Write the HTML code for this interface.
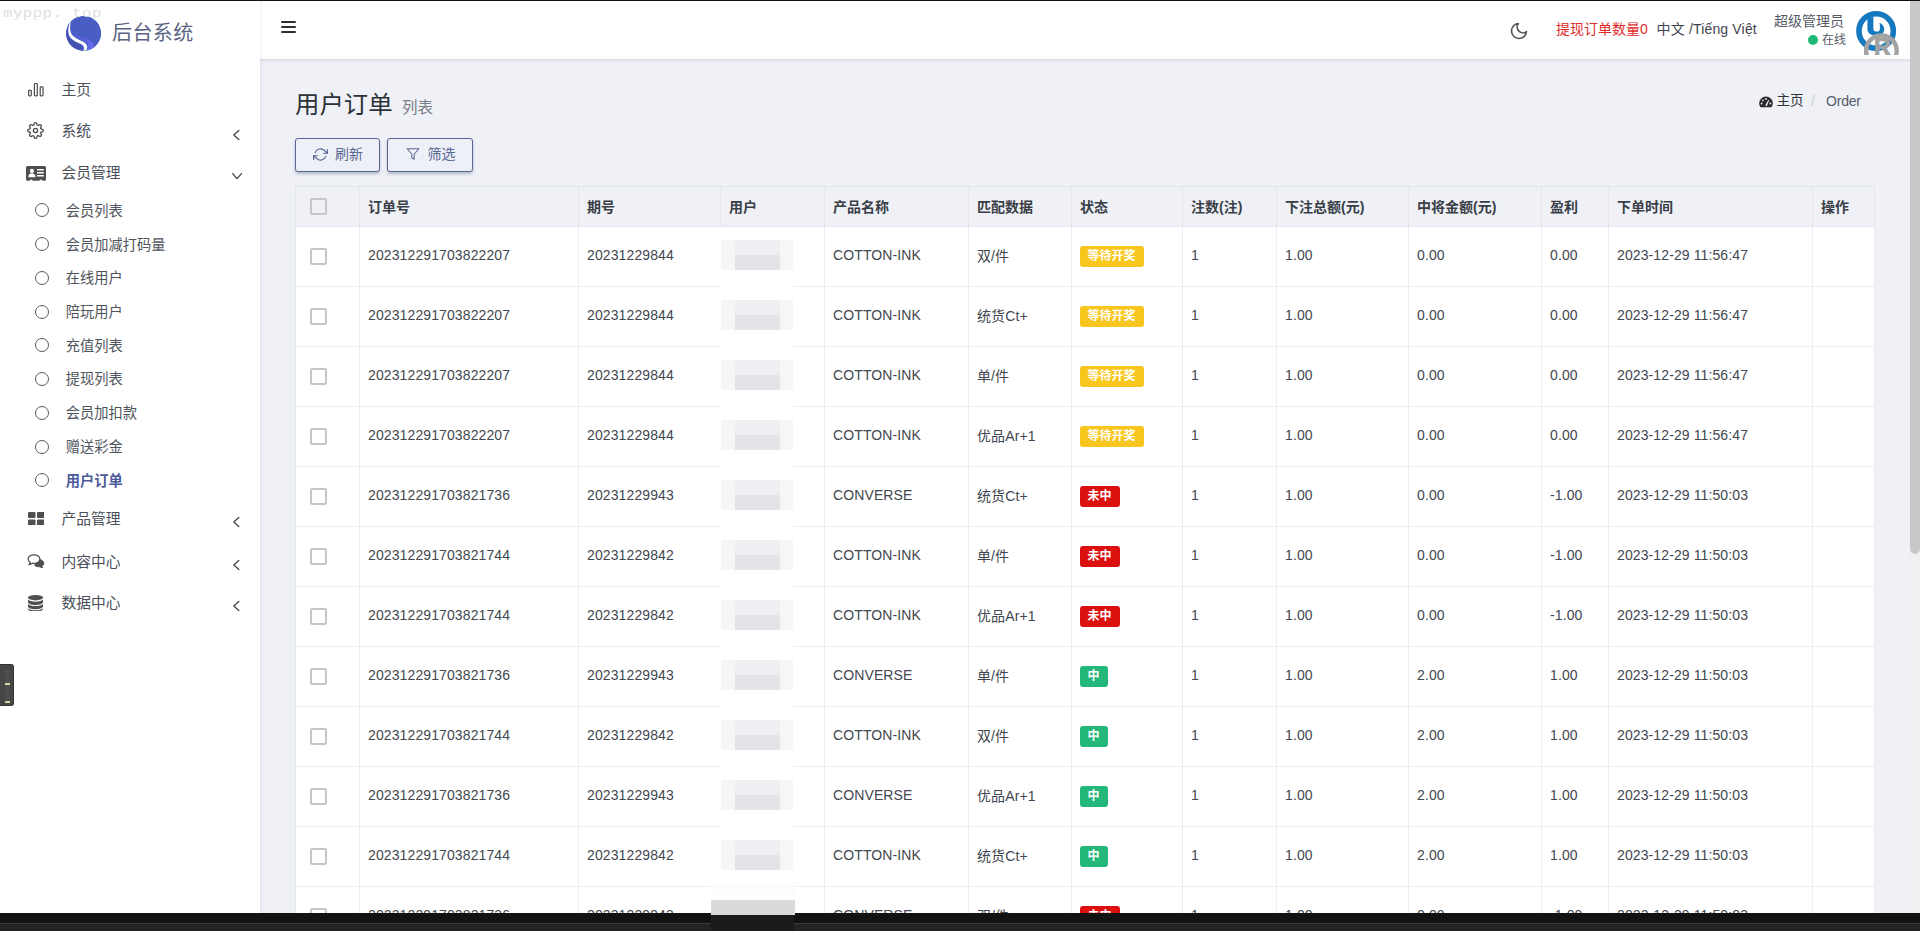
<!DOCTYPE html>
<html lang="zh-CN">
<head>
<meta charset="utf-8">
<title>用户订单</title>
<style>
*{box-sizing:border-box;margin:0;padding:0}
html,body{width:1920px;height:931px;overflow:hidden;background:#eff1f7}
body{position:relative;font-family:"Liberation Sans","Noto Sans CJK SC",sans-serif;font-size:14px;color:#414750}
.abs{position:absolute}
#topline{left:0;top:0;width:1920px;height:1px;background:#111;z-index:50}
#sidebar{left:0;top:0;width:260px;height:913px;background:#fff;z-index:5;box-shadow:1px 0 3px rgba(80,80,100,.10)}
#navbar{left:260px;top:0;width:1650px;height:59px;background:#fff;box-shadow:0 1px 4px rgba(100,105,130,.22);z-index:4}
#bottombar{left:0;top:913px;width:1920px;height:18px;background:#121212;z-index:60}
#bottombar i{position:absolute;left:0;top:10px;width:1920px;height:8px;background:#232321;border-top:1px solid #3a3a3a}#bottombar b{position:absolute;left:711px;top:2px;width:83px;height:16px;background:#1b1b1b}#mz{left:711px;top:885px;width:84px;height:30px;background:linear-gradient(#fdfdfd 0,#fdfdfd 50%,#dadada 50%,#dadada 100%);z-index:61}
#scroll{left:1910px;top:1px;width:10px;height:912px;background:#f0f0f0;z-index:40}
#scroll i{position:absolute;left:0;top:0;width:10px;height:553px;background:#c8c8c8;border-radius:0 0 5px 5px}
#wm{left:3px;top:5px;font-family:"Liberation Mono","Noto Serif CJK SC",monospace;font-size:12px;line-height:18px;color:#dedede;letter-spacing:.4px;transform:scale(1.3,1.05);transform-origin:0 50%;z-index:7;white-space:nowrap}
#brand{left:112px;top:19px;font-size:20px;line-height:28px;color:#5a6482;white-space:nowrap;letter-spacing:.4px;z-index:6}
#logo{left:65px;top:15px;width:38px;height:38px;z-index:6}
.mi{position:absolute;left:61.500px;font-size:14.750px;line-height:20px;color:#4a4f58;white-space:nowrap;z-index:6}
.si{position:absolute;left:65.700px;font-size:14.250px;line-height:20px;color:#4f545c;white-space:nowrap;z-index:6}
.si.act{color:#4c5a9a;font-weight:bold}
.circ{position:absolute;left:35px;width:14px;height:14px;border:1.450px solid #5a5a5a;border-radius:50%;z-index:6}
.ico{position:absolute;z-index:6}
.arr{position:absolute;left:231px;width:10px;height:12px;z-index:6}

/* navbar */
#burger{left:281px;top:21px;width:15px;height:12px;z-index:6}
#burger i{position:absolute;left:0;width:15px;height:2px;background:#2f2f2f;border-radius:1px}
#moon{left:1509px;top:21px;width:20px;height:20px;z-index:6}
#wd{left:1556px;top:19px;font-size:14px;line-height:20px;color:#e02b2b;white-space:nowrap;z-index:6}
#lang{left:1656.500px;top:18.500px;letter-spacing:.17px;font-size:14px;line-height:20px;color:#3f4450;white-space:nowrap;z-index:6}
#uname{left:1774px;top:11px;width:70px;text-align:right;font-size:14px;line-height:20px;color:#555b66;white-space:nowrap;z-index:6}
#ustat{left:1808px;top:31px;font-size:12px;line-height:18px;color:#555b66;white-space:nowrap;z-index:6}
#ustat b{position:absolute;left:0;top:4px;width:10px;height:10px;border-radius:50%;background:#21b978}
#ustat span{margin-left:14px}
#avatar{left:1850px;top:8px;width:52px;height:47px;z-index:6;overflow:hidden}
/* content header */
#title{left:295px;top:86.500px;font-size:24.400px;line-height:36px;color:#2c3138;font-weight:400;white-space:nowrap}
#sub{left:402px;top:96.500px;font-size:15.5px;line-height:22px;color:#777c85;white-space:nowrap}
#bc{left:1759px;top:91px;font-size:14px;line-height:20px;white-space:nowrap;color:#555d6b}
#bc .h{position:absolute;left:17.500px;top:0;color:#2f3238;font-size:13.600px}
#bc .s{position:absolute;left:52px;top:0;color:#c8cad2}
#bc .o{position:absolute;left:67px;top:0;color:#555d6b;letter-spacing:-.2px}
#bc svg{position:absolute;left:0;top:4.500px;width:14px;height:12px}
.btn{position:absolute;top:138px;height:34px;border:1px solid #59668f;border-radius:3px;background:#eef0f8;color:#5a6792;font-size:14px;line-height:32px;white-space:nowrap;box-shadow:0 2px 3px rgba(60,70,110,.32)}
.btn svg{position:absolute}
.btn span{position:absolute;top:-1px}
/* table */
#tbl{left:295px;top:186px;width:1580px;border-collapse:separate;border-spacing:0;table-layout:fixed;border-left:1px solid #e3e5ec;border-top:1px solid #e3e5ec;background:#fff}
#tbl th,#tbl td{border-right:1px solid #ededf1;border-bottom:1px solid #ededf1;padding:0 0 0 8px;text-align:left;vertical-align:middle;white-space:nowrap;overflow:hidden;font-size:14px}
#tbl th{border-bottom-color:#e3e5eb;border-right-color:#e4e6ec;height:40px;background:#eff1f7;color:#393e46;font-weight:bold;font-size:14px;padding-bottom:2px}
#tbl td{height:60px;color:#414750;padding-bottom:4px;letter-spacing:.11px}
#tbl td.ck,#tbl th.ck{padding-left:14px}#tbl td.ck{padding-bottom:0;padding-top:0}#tbl td.ck .cb{position:relative;top:-.5px}#tbl th.ck{padding-bottom:0}
.cb{display:block;width:17px;height:17px;border:2px solid #c4c6ca;border-radius:2px;background:#fff}
th .cb{background:#eff1f7}
.bd{position:relative;top:2px;letter-spacing:0;display:inline-block;height:21px;line-height:20px;padding:0 8px 0 7.500px;border-radius:3px;color:#fff;font-size:12px;font-weight:bold;vertical-align:middle}
.bd.w{background:#f9c61e}.bd.d{background:#dc0f0f}.bd.s{background:#24b77a}
td.u{position:relative;padding:0!important;overflow:visible!important;border-right-color:#e6e8ee}
td.u i{position:absolute;display:block}
td.u .m1{left:-1px;top:-1px;width:73px;height:61px;background:#fff}
tbody tr:first-child td.u .m1{top:0;height:60px}
td.u .m2{left:0;top:13px;width:72px;height:30px;background:#f6f6f7}
td.u .m3{left:14px;top:13px;width:45px;height:30px;background:linear-gradient(#eeeff2 0,#eeeff2 50%,#e3e4e8 50%,#e3e4e8 100%)}
</style>
</head>
<body>
<div id="topline" class="abs"></div>
<div id="sidebar" class="abs"></div>
<div id="navbar" class="abs"></div>
<div id="wm" class="abs">myppp. top</div>
<svg id="logo" class="abs" viewBox="0 0 38 38"><defs><linearGradient id="lg" x1="0" y1="0" x2="1" y2="1"><stop offset="0" stop-color="#4b5dc4"/><stop offset=".55" stop-color="#5c62dc"/><stop offset="1" stop-color="#7070f8"/></linearGradient><clipPath id="lc"><circle cx="18.600" cy="18.400" r="17.500"/></clipPath></defs><circle cx="18.600" cy="18.400" r="17.500" fill="#4a5dc5"/><g clip-path="url(#lc)"><path d="M7 5C1 9-1 20 3 27c3 5 9 8 16 9-1-3-2-6-6-8-5-2-9-4-10-9C2.500 14 4 9 7 5z" fill="#4452b2"/><path d="M6.500 17c5 4.500 11.500 5 17.500 7.800 5 2.500 6.500 6.700 3 10.200l-5 1c3-4 1.800-7.800-3.200-10.200C13.500 23.300 8 22 6.500 17z" fill="url(#lg)"/><path d="M6.200 5.500C3.300 10 2.400 16 4.200 20.500c2 4.500 6.600 6.200 11.100 8.200 3.300 1.500 4.600 3.500 3 7.100l3.200-.5c2.200-4.400-.2-7.200-5-9.400C11.500 23.500 7.300 21.800 5.700 17.300 4.600 13.700 5.100 9.500 6.200 5.500z" fill="#fff"/></g></svg>
<div id="brand" class="abs">后台系统</div>

<!-- sidebar menu -->
<svg class="ico" style="left:27px;top:82px;width:18px;height:16px" viewBox="0 0 18 16" fill="none" stroke="#4d4d4d" stroke-width="1.2"><rect x="1.600" y="8.400" width="2.700" height="5.500" rx=".8"/><rect x="7.400" y="1.500" width="2.900" height="12.400" rx=".8"/><rect x="13.200" y="4.900" width="2.800" height="9" rx=".8"/></svg>
<svg class="ico" style="left:27.200px;top:121.900px;width:17px;height:17px" viewBox="0 0 24 24" fill="none" stroke="#4d4d4d" stroke-width="1.850" stroke-linecap="round" stroke-linejoin="round"><circle cx="12" cy="12" r="3"/><path d="M19.4 15a1.65 1.65 0 0 0 .33 1.82l.06.06a2 2 0 0 1 0 2.83 2 2 0 0 1-2.83 0l-.06-.06a1.65 1.65 0 0 0-1.82-.33 1.65 1.65 0 0 0-1 1.51V21a2 2 0 0 1-2 2 2 2 0 0 1-2-2v-.09A1.65 1.65 0 0 0 9 19.4a1.65 1.65 0 0 0-1.82.33l-.06.06a2 2 0 0 1-2.83 0 2 2 0 0 1 0-2.83l.06-.06a1.65 1.65 0 0 0 .33-1.82 1.65 1.65 0 0 0-1.51-1H3a2 2 0 0 1-2-2 2 2 0 0 1 2-2h.09A1.65 1.65 0 0 0 4.6 9a1.65 1.65 0 0 0-.33-1.82l-.06-.06a2 2 0 0 1 0-2.83 2 2 0 0 1 2.83 0l.06.06a1.65 1.65 0 0 0 1.82.33H9a1.65 1.65 0 0 0 1-1.51V3a2 2 0 0 1 2-2 2 2 0 0 1 2 2v.09a1.65 1.65 0 0 0 1 1.51 1.65 1.65 0 0 0 1.82-.33l.06-.06a2 2 0 0 1 2.83 0 2 2 0 0 1 0 2.83l-.06.06a1.65 1.65 0 0 0-.33 1.82V9a1.65 1.65 0 0 0 1.51 1H21a2 2 0 0 1 2 2 2 2 0 0 1-2 2h-.09a1.65 1.65 0 0 0-1.51 1z"/></svg>
<svg class="ico" style="left:26px;top:165.500px;width:20px;height:15px" viewBox="0 0 20 15"><path d="M1.500 0h17A1.500 1.500 0 0 1 20 1.500v11.700a1.500 1.500 0 0 1-1.500 1.500h-2.300v-1h-2.600v1H6.400v-1H3.800v1H1.500A1.500 1.500 0 0 1 0 13.200V1.500A1.500 1.500 0 0 1 1.500 0z" fill="#4f4f4f"/><circle cx="5.900" cy="4.900" r="2.100" fill="#fff"/><path d="M2.300 11.300c0-2.600 1.400-4 3.600-4s3.600 1.400 3.600 4z" fill="#fff"/><rect x="11" y="3" width="6.800" height="1.500" fill="#fff"/><rect x="11" y="6" width="6.800" height="1.500" fill="#fff"/><rect x="11" y="9" width="6.800" height="1.500" fill="#fff"/></svg>
<svg class="ico" style="left:27.500px;top:511.700px;width:16.500px;height:13.600px" viewBox="0 0 16.500 13.600" fill="#4f4f4f"><rect x="0" y="0" width="7.500" height="6" rx="1"/><rect x="9" y="0" width="7.500" height="6" rx="1"/><rect x="0" y="7.600" width="7.500" height="6" rx="1"/><rect x="9" y="7.600" width="7.500" height="6" rx="1"/></svg>
<svg class="ico" style="left:26.500px;top:554.300px;width:18.200px;height:14.200px" viewBox="0 0 18.200 14.200"><path d="M11.600 5.200c2.900.3 5.200 2 5.200 4.100 0 1.200-.8 2.300-2 3 .3.700.8 1.300 1.300 1.600-1.300 0-2.500-.4-3.400-1.100-2.300.2-4.300-.5-5.400-1.700" fill="#4f4f4f" stroke="#4f4f4f" stroke-width=".9" stroke-linejoin="round"/><path d="M7 .8c3.300 0 5.900 1.900 5.900 4.300S10.300 9.400 7 9.400c-.6 0-1.100-.1-1.600-.2-.9.800-2.100 1.300-3.400 1.400.6-.6 1-1.300 1.300-2.100C2 7.700 1.100 6.500 1.100 5.100 1.100 2.700 3.700.8 7 .8z" fill="#fff" stroke="#4f4f4f" stroke-width="1.200" stroke-linejoin="round"/></svg>
<svg class="ico" style="left:28.300px;top:594.600px;width:15px;height:16.600px" viewBox="0 0 15 16.600" fill="#4f4f4f"><ellipse cx="7.500" cy="2.700" rx="7.500" ry="2.700"/><path d="M0 4.600c1.200 1.500 4 2.100 7.500 2.100S13.800 6.100 15 4.600v2.600c0 1.500-3.400 2.700-7.500 2.700S0 8.700 0 7.200z"/><path d="M0 8.900c1.200 1.500 4 2.100 7.500 2.100s6.300-.6 7.500-2.100v2.600c0 1.500-3.400 2.700-7.500 2.700S0 13 0 11.500z"/><path d="M0 13.200c1.200 1.500 4 2.100 7.500 2.100s6.300-.6 7.500-2.100v.7c0 1.500-3.400 2.700-7.500 2.700S0 15.400 0 13.900z"/></svg>
<div class="mi" style="top:80.0px">主页</div>
<div class="mi" style="top:121.3px">系统</div>
<svg class="arr" style="top:128.6px" viewBox="0 0 10 12" fill="none" stroke="#444" stroke-width="1.300" stroke-linecap="round" stroke-linejoin="round"><polyline points="7.800,1.500 2.800,6 7.800,10.500"/></svg>
<div class="mi" style="top:162.8px">会员管理</div>
<svg class="arr" style="left:230.500px;top:171.4px;width:12px;height:10px" viewBox="0 0 12 10" fill="none" stroke="#444" stroke-width="1.300" stroke-linecap="round" stroke-linejoin="round"><polyline points="1.700,2.600 6,7.600 10.500,2.600"/></svg>
<div class="mi" style="top:508.9px">产品管理</div>
<svg class="arr" style="top:516.2px" viewBox="0 0 10 12" fill="none" stroke="#444" stroke-width="1.300" stroke-linecap="round" stroke-linejoin="round"><polyline points="7.800,1.500 2.800,6 7.800,10.500"/></svg>
<div class="mi" style="top:551.6px">内容中心</div>
<svg class="arr" style="top:558.9px" viewBox="0 0 10 12" fill="none" stroke="#444" stroke-width="1.300" stroke-linecap="round" stroke-linejoin="round"><polyline points="7.800,1.500 2.800,6 7.800,10.500"/></svg>
<div class="mi" style="top:593.1px">数据中心</div>
<svg class="arr" style="top:600.4px" viewBox="0 0 10 12" fill="none" stroke="#444" stroke-width="1.300" stroke-linecap="round" stroke-linejoin="round"><polyline points="7.800,1.500 2.800,6 7.800,10.500"/></svg>
<div class="circ" style="top:203.3px"></div><div class="si" style="top:200.7px">会员列表</div>
<div class="circ" style="top:237.1px"></div><div class="si" style="top:234.5px">会员加减打码量</div>
<div class="circ" style="top:270.8px"></div><div class="si" style="top:268.2px">在线用户</div>
<div class="circ" style="top:304.6px"></div><div class="si" style="top:301.9px">陪玩用户</div>
<div class="circ" style="top:338.3px"></div><div class="si" style="top:335.7px">充值列表</div>
<div class="circ" style="top:372.1px"></div><div class="si" style="top:369.4px">提现列表</div>
<div class="circ" style="top:405.8px"></div><div class="si" style="top:403.2px">会员加扣款</div>
<div class="circ" style="top:439.6px"></div><div class="si" style="top:436.9px">赠送彩金</div>
<div class="circ" style="top:473.3px"></div><div class="si act" style="top:470.7px">用户订单</div>
<div class="abs" style="left:0;top:664px;width:14px;height:42px;background:#464646;border:1px solid #333;border-left:0;border-radius:0 3px 3px 0;z-index:8"><i style="position:absolute;left:5px;top:6px;width:5px;height:30px;background:repeating-linear-gradient(#555 0,#555 1px,#464646 1px,#464646 2px)"></i><i style="position:absolute;left:5px;top:18px;width:5px;height:2px;background:#d9d3a8"></i><i style="position:absolute;left:5px;top:36px;width:5px;height:2px;background:#d9d3a8"></i></div>

<!-- navbar -->
<div id="burger" class="abs"><i style="top:0"></i><i style="top:5px"></i><i style="top:10px"></i></div>
<svg id="moon" class="abs" viewBox="0 0 24 24" fill="none" stroke="#555" stroke-width="2" stroke-linecap="round" stroke-linejoin="round"><path d="M21 12.790A9 9 0 1 1 11.210 3 7 7 0 0 0 21 12.790z"/></svg>
<div id="wd" class="abs">提现订单数量0</div>
<div id="lang" class="abs">中文 /Tiếng Việt</div>
<div id="uname" class="abs">超级管理员</div>
<div id="ustat" class="abs"><b></b><span>在线</span></div>
<svg id="avatar" class="abs" viewBox="0 0 52 47"><circle cx="26.150" cy="23" r="17.200" fill="#fff" stroke="#1679c0" stroke-width="5.600"/><path d="M17.400 9.500V21c0 4 3.600 6.700 8.600 6.700s8.300-2.700 8.300-6.700c0-3-2.300-5-4.800-6.300.5 2.300.5 4.800.3 6.800-.3 1.700-1.800 2.100-3.300 2.100-2 0-3.100-1.100-3.100-2.600V9z" fill="#1679c0"/><circle cx="31.400" cy="42.700" r="15.300" fill="none" stroke="#a3a3a3" stroke-width="4.400"/><text x="32.200" y="47.300" text-anchor="middle" style="font:bold 23px 'Liberation Sans',sans-serif" fill="#a3a3a3" stroke="#a3a3a3" stroke-width=".9">R</text></svg>

<!-- content header -->
<div id="title" class="abs">用户订单</div>
<div id="sub" class="abs">列表</div>
<div id="bc" class="abs"><svg viewBox="0 0 14 12"><path d="M7 .5A6.800 6.800 0 0 0 .2 7.300c0 1.500.5 2.900 1.300 4h11c.8-1.100 1.300-2.500 1.300-4A6.800 6.800 0 0 0 7 .5z" fill="#2b2b2e"/><circle cx="2.600" cy="7.500" r=".9" fill="#eff1f7"/><circle cx="3.900" cy="4.300" r=".9" fill="#eff1f7"/><circle cx="7" cy="3" r=".9" fill="#eff1f7"/><circle cx="11.400" cy="7.500" r=".9" fill="#eff1f7"/><path d="M6.300 9.500l2.900-5.600.9.500-2.300 5.800z" fill="#eff1f7"/></svg><span class="h">主页</span><span class="s">/</span><span class="o">Order</span></div>
<div class="btn" style="left:295px;width:85px"><svg style="left:16.800px;top:7.500px;width:15px;height:15px" viewBox="0 0 24 24" fill="none" stroke="#5a6792" stroke-width="1.800" stroke-linecap="round" stroke-linejoin="round"><polyline points="23 4 23 10 17 10"/><polyline points="1 20 1 14 7 14"/><path d="M3.510 9a9 9 0 0 1 14.850-3.360L23 10M1 14l4.640 4.360A9 9 0 0 0 20.490 15"/></svg><span style="left:39px">刷新</span></div>
<div class="btn" style="left:387px;width:86px"><svg style="left:18px;top:8px;width:14px;height:14px" viewBox="0 0 24 24" fill="none" stroke="#5a6792" stroke-width="1.800" stroke-linecap="round" stroke-linejoin="round"><polygon points="22 3 2 3 10 12.460 10 19 14 21 14 12.460 22 3"/></svg><span style="left:39.500px">筛选</span></div>

<!-- table -->
<table id="tbl" class="abs">
<colgroup><col style="width:64px"><col style="width:219px"><col style="width:142px"><col style="width:104px"><col style="width:144px"><col style="width:103px"><col style="width:111px"><col style="width:94px"><col style="width:132px"><col style="width:133px"><col style="width:67px"><col style="width:204px"><col style="width:62px"></colgroup>
<thead><tr><th class="ck"><span class="cb"></span></th><th>订单号</th><th>期号</th><th>用户</th><th>产品名称</th><th>匹配数据</th><th>状态</th><th>注数(注)</th><th>下注总额(元)</th><th>中将金额(元)</th><th>盈利</th><th>下单时间</th><th>操作</th></tr></thead>
<tbody>
<tr><td class="ck"><span class="cb"></span></td><td>202312291703822207</td><td>20231229844</td><td class="u"><i class="m1"></i><i class="m2"></i><i class="m3"></i></td><td>COTTON-INK</td><td>双/件</td><td><span class="bd w">等待开奖</span></td><td>1</td><td>1.00</td><td>0.00</td><td>0.00</td><td>2023-12-29 11:56:47</td><td></td></tr>
<tr><td class="ck"><span class="cb"></span></td><td>202312291703822207</td><td>20231229844</td><td class="u"><i class="m1"></i><i class="m2"></i><i class="m3"></i></td><td>COTTON-INK</td><td>统货Ct+</td><td><span class="bd w">等待开奖</span></td><td>1</td><td>1.00</td><td>0.00</td><td>0.00</td><td>2023-12-29 11:56:47</td><td></td></tr>
<tr><td class="ck"><span class="cb"></span></td><td>202312291703822207</td><td>20231229844</td><td class="u"><i class="m1"></i><i class="m2"></i><i class="m3"></i></td><td>COTTON-INK</td><td>单/件</td><td><span class="bd w">等待开奖</span></td><td>1</td><td>1.00</td><td>0.00</td><td>0.00</td><td>2023-12-29 11:56:47</td><td></td></tr>
<tr><td class="ck"><span class="cb"></span></td><td>202312291703822207</td><td>20231229844</td><td class="u"><i class="m1"></i><i class="m2"></i><i class="m3"></i></td><td>COTTON-INK</td><td>优品Ar+1</td><td><span class="bd w">等待开奖</span></td><td>1</td><td>1.00</td><td>0.00</td><td>0.00</td><td>2023-12-29 11:56:47</td><td></td></tr>
<tr><td class="ck"><span class="cb"></span></td><td>202312291703821736</td><td>20231229943</td><td class="u"><i class="m1"></i><i class="m2"></i><i class="m3"></i></td><td>CONVERSE</td><td>统货Ct+</td><td><span class="bd d">未中</span></td><td>1</td><td>1.00</td><td>0.00</td><td>-1.00</td><td>2023-12-29 11:50:03</td><td></td></tr>
<tr><td class="ck"><span class="cb"></span></td><td>202312291703821744</td><td>20231229842</td><td class="u"><i class="m1"></i><i class="m2"></i><i class="m3"></i></td><td>COTTON-INK</td><td>单/件</td><td><span class="bd d">未中</span></td><td>1</td><td>1.00</td><td>0.00</td><td>-1.00</td><td>2023-12-29 11:50:03</td><td></td></tr>
<tr><td class="ck"><span class="cb"></span></td><td>202312291703821744</td><td>20231229842</td><td class="u"><i class="m1"></i><i class="m2"></i><i class="m3"></i></td><td>COTTON-INK</td><td>优品Ar+1</td><td><span class="bd d">未中</span></td><td>1</td><td>1.00</td><td>0.00</td><td>-1.00</td><td>2023-12-29 11:50:03</td><td></td></tr>
<tr><td class="ck"><span class="cb"></span></td><td>202312291703821736</td><td>20231229943</td><td class="u"><i class="m1"></i><i class="m2"></i><i class="m3"></i></td><td>CONVERSE</td><td>单/件</td><td><span class="bd s">中</span></td><td>1</td><td>1.00</td><td>2.00</td><td>1.00</td><td>2023-12-29 11:50:03</td><td></td></tr>
<tr><td class="ck"><span class="cb"></span></td><td>202312291703821744</td><td>20231229842</td><td class="u"><i class="m1"></i><i class="m2"></i><i class="m3"></i></td><td>COTTON-INK</td><td>双/件</td><td><span class="bd s">中</span></td><td>1</td><td>1.00</td><td>2.00</td><td>1.00</td><td>2023-12-29 11:50:03</td><td></td></tr>
<tr><td class="ck"><span class="cb"></span></td><td>202312291703821736</td><td>20231229943</td><td class="u"><i class="m1"></i><i class="m2"></i><i class="m3"></i></td><td>CONVERSE</td><td>优品Ar+1</td><td><span class="bd s">中</span></td><td>1</td><td>1.00</td><td>2.00</td><td>1.00</td><td>2023-12-29 11:50:03</td><td></td></tr>
<tr><td class="ck"><span class="cb"></span></td><td>202312291703821744</td><td>20231229842</td><td class="u"><i class="m1"></i><i class="m2"></i><i class="m3"></i></td><td>COTTON-INK</td><td>统货Ct+</td><td><span class="bd s">中</span></td><td>1</td><td>1.00</td><td>2.00</td><td>1.00</td><td>2023-12-29 11:50:03</td><td></td></tr>
<tr><td class="ck"><span class="cb"></span></td><td>202312291703821736</td><td>20231229943</td><td class="u"><i class="m1"></i><i class="m2"></i><i class="m3"></i></td><td>CONVERSE</td><td>双/件</td><td><span class="bd d">未中</span></td><td>1</td><td>1.00</td><td>0.00</td><td>-1.00</td><td>2023-12-29 11:50:03</td><td></td></tr>
</tbody></table>
<div id="scroll" class="abs"><i></i></div>
<div id="bottombar" class="abs"><i></i><b></b></div>
<div id="mz" class="abs"></div>
</body>
</html>
